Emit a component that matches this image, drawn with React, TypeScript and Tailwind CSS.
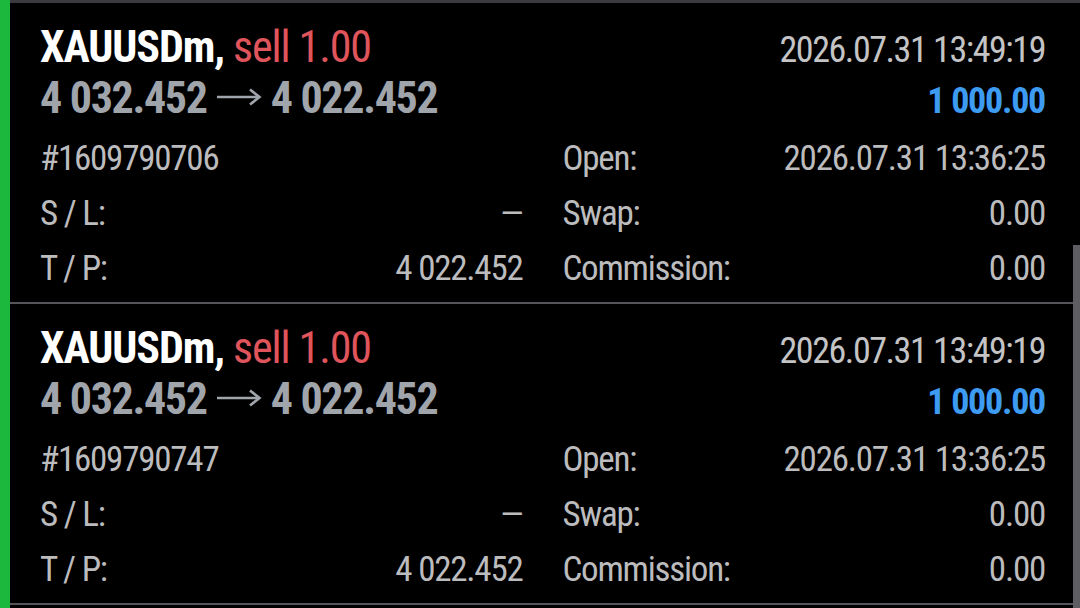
import React from 'react';

interface Deal {
  id: string;
  symbol: string;
  side: string;
  volume: string;
  openPrice: string;
  closePrice: string;
  closeTime: string;
  openTime: string;
  profit: string;
  sl: string;
  tp: string;
  swap: string;
  commission: string;
}

const deals: Deal[] = [
  {
    id: '1609790706',
    symbol: 'XAUUSDm',
    side: 'sell',
    volume: '1.00',
    openPrice: '4 032.452',
    closePrice: '4 022.452',
    closeTime: '2026.07.31 13:49:19',
    openTime: '2026.07.31 13:36:25',
    profit: '1 000.00',
    sl: '—',
    tp: '4 022.452',
    swap: '0.00',
    commission: '0.00',
  },
  {
    id: '1609790747',
    symbol: 'XAUUSDm',
    side: 'sell',
    volume: '1.00',
    openPrice: '4 032.452',
    closePrice: '4 022.452',
    closeTime: '2026.07.31 13:49:19',
    openTime: '2026.07.31 13:36:25',
    profit: '1 000.00',
    sl: '—',
    tp: '4 022.452',
    swap: '0.00',
    commission: '0.00',
  },
];

function Row({ label, value }: { label: string; value: string }) {
  return (
    <div className="flex items-baseline justify-between">
      <span>{label}</span>
      <span>{value}</span>
    </div>
  );
}

// long thin arrow between open and close price
function Arrow() {
  return (
    <svg width="46" height="20" viewBox="0 0 46 20" className="mx-[9px] inline-block align-[6px]">
      <path d="M1 10H43M34 2.5L43.5 10L34 17.5" fill="none" stroke="#a0a4ab" strokeWidth="2.6" />
    </svg>
  );
}

function DealCard({ deal }: { deal: Deal }) {
  return (
    <div className="pl-[30px] pr-[35px] pt-[20px] pb-[6px]">
      {/* Header */}
      <div className="flex items-baseline justify-between leading-[48px]">
        <div className="text-[44px] font-bold tracking-[-0.025em] text-white">
          {deal.symbol},{' '}
          <span className="font-normal text-[#e0555b]">
            {deal.side} {deal.volume}
          </span>
        </div>
        <div className="text-[36px] tracking-[-0.04em] text-[#c4c4c6]">{deal.closeTime}</div>
      </div>
      <div className="flex items-baseline justify-between leading-[48px]">
        <div className="text-[44px] font-bold tracking-[-0.03em] text-[#a0a4ab]">
          {deal.openPrice}
          <Arrow />
          {deal.closePrice}
        </div>
        <div className="text-[36px] font-bold tracking-[-0.035em] text-[#3d9cf2]">{deal.profit}</div>
      </div>

      {/* Details */}
      <div className="mt-[6px] grid grid-cols-2 gap-x-[40px] text-[35px] leading-[55px] tracking-[-0.035em] text-[#bcbcbe]">
        <Row label={`#${deal.id}`} value="" />
        <Row label="Open:" value={deal.openTime} />
        <Row label="S / L:" value={deal.sl} />
        <Row label="Swap:" value={deal.swap} />
        <Row label="T / P:" value={deal.tp} />
        <Row label="Commission:" value={deal.commission} />
      </div>
    </div>
  );
}

export default function App() {
  return (
    <div
      className="relative flex h-[608px] w-[1080px] overflow-hidden bg-black [font-stretch:75%]"
      style={{ fontFamily: "'Roboto Condensed', Roboto, 'Liberation Sans', sans-serif" }}
    >
      <div className="w-[10px] shrink-0 bg-[#1bb83d]" />
      <div className="flex flex-1 flex-col">
        <div className="h-[3px] bg-[#3a3a40]" />
        {deals.map((d) => (
          <div key={d.id}>
            <DealCard deal={d} />
            <div className="h-[2px] bg-[#55555a]" />
          </div>
        ))}
      </div>
      {/* Scrollbar */}
      <div className="absolute right-0 top-[245px] bottom-0 w-[7px] bg-[#5e5e62]" />
    </div>
  );
}
